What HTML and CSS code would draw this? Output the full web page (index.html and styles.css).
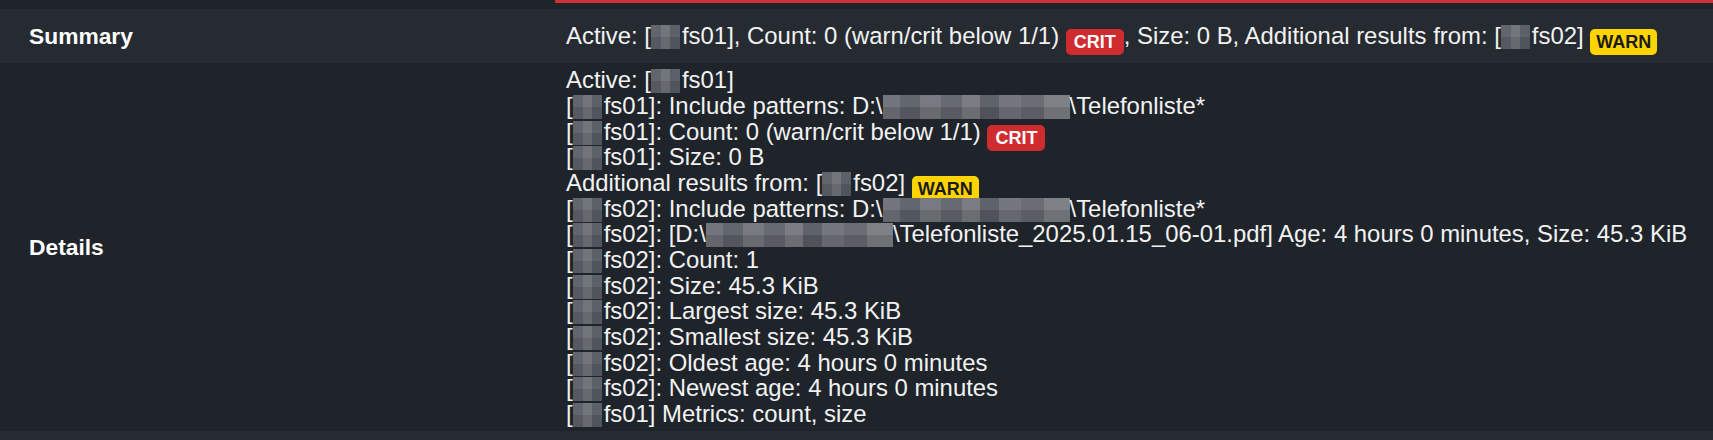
FILE: index.html
```html
<!DOCTYPE html>
<html>
<head>
<meta charset="utf-8">
<link rel="stylesheet" href="styles.css">
</head>
<body>
<div class="page">
  <div class="topstrip"><div class="redbar"></div></div>
  <div class="row row-light summary">
    <div class="label">Summary</div>
    <div class="value">
      <div class="line">Active: [<span class="blur s"></span>fs01], Count: 0 (warn/crit below 1/1) <span class="badge crit">CRIT</span>, Size: 0 B, Additional results from: [<span class="blur s"></span>fs02] <span class="badge warn">WARN</span></div>
    </div>
  </div>
  <div class="row row-dark details">
    <div class="label">Details</div>
    <div class="value">
      <div class="line">Active: [<span class="blur s"></span>fs01]</div>
      <div class="line">[<span class="blur s"></span>fs01]: Include patterns: D:\<span class="blur l"></span>\Telefonliste*</div>
      <div class="line">[<span class="blur s"></span>fs01]: Count: 0 (warn/crit below 1/1) <span class="badge crit">CRIT</span></div>
      <div class="line">[<span class="blur s"></span>fs01]: Size: 0 B</div>
      <div class="line">Additional results from: [<span class="blur s"></span>fs02] <span class="badge warn">WARN</span></div>
      <div class="line">[<span class="blur s"></span>fs02]: Include patterns: D:\<span class="blur l"></span>\Telefonliste*</div>
      <div class="line">[<span class="blur s"></span>fs02]: [D:\<span class="blur l"></span>\Telefonliste_2025.01.15_06-01.pdf] Age: 4 hours 0 minutes, Size: 45.3 KiB</div>
      <div class="line">[<span class="blur s"></span>fs02]: Count: 1</div>
      <div class="line">[<span class="blur s"></span>fs02]: Size: 45.3 KiB</div>
      <div class="line">[<span class="blur s"></span>fs02]: Largest size: 45.3 KiB</div>
      <div class="line">[<span class="blur s"></span>fs02]: Smallest size: 45.3 KiB</div>
      <div class="line">[<span class="blur s"></span>fs02]: Oldest age: 4 hours 0 minutes</div>
      <div class="line">[<span class="blur s"></span>fs02]: Newest age: 4 hours 0 minutes</div>
      <div class="line">[<span class="blur s"></span>fs01] Metrics: count, size</div>
    </div>
  </div>
  <div class="bottomstrip"></div>
</div>
</body>
</html>
```
FILE: styles.css
```css
html, body {
  margin: 0;
  padding: 0;
  background: #1f242b;
}
.page {
  width: 1713px;
  height: 440px;
  display: flex;
  flex-direction: column;
  font-family: "Liberation Sans", Arial, sans-serif;
  font-size: 23.9px;
  color: #f2f2f2;
  overflow: hidden;
}
.topstrip {
  height: 9px;
  background: #1f242b;
  flex: none;
}
.redbar {
  margin-left: 555px;
  height: 3px;
  background: #cf3035;
}
.row {
  display: grid;
  grid-template-columns: 566px 1fr;
  align-items: center;
  flex: none;
}
.row-light { background: #262b32; }
.row-dark { background: #1f242b; }
.summary { height: 54px; }
.details { padding: 4px 0; height: 360px; }
.bottomstrip {
  flex: 1;
  background: #262b32;
}
.label {
  padding-left: 29px;
  font-weight: bold;
  font-size: 22.8px;
  color: #ffffff;
}
.line {
  line-height: 25.7px;
  height: 25.7px;
  white-space: nowrap;
}
.blur {
  display: inline-block;
  height: 24px;
  vertical-align: -5px;
  background:
    linear-gradient(180deg, rgba(255,255,255,0.04) 0 50%, rgba(0,0,0,0.06) 50% 100%),
    linear-gradient(90deg, #5b5f66 0 33%, #6c7076 33% 66%, #565a61 66% 100%);
}
.blur.s {
  width: 29px;
  margin-right: 2px;
}
.blur.l {
  width: 187px;
  background:
    linear-gradient(180deg, rgba(255,255,255,0.05) 0 50%, rgba(0,0,0,0.08) 50% 100%),
    linear-gradient(90deg, #6b6f75 0 9%, #5a5e65 9% 20%, #70747a 20% 31%, #5f636a 31% 42%, #73777d 42% 52%, #565a61 52% 62%, #6d7177 62% 74%, #62666d 74% 86%, #777b80 86% 100%);
}
.badge {
  display: inline-block;
  font-size: 18px;
  font-weight: bold;
  line-height: 20px;
  padding: 3px 6px;
  border-radius: 5px;
  vertical-align: -4px;
}
.crit {
  background: #cf2c2f;
  color: #ffffff;
  padding: 3px 8px;
}
.warn {
  background: #fed400;
  color: #1a1a1a;
}
```
